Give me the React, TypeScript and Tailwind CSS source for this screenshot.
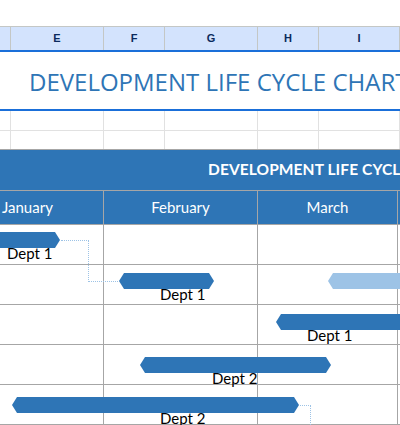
import React from 'react';

const cols = [
  { label: '', w: 'w-[11px]' },
  { label: 'E', w: 'w-[93px]' },
  { label: 'F', w: 'w-[61px]' },
  { label: 'G', w: 'w-[93px]' },
  { label: 'H', w: 'w-[61px]' },
  { label: 'I', w: 'w-[81px]' },
];

const hex = '[clip-path:polygon(5px_0,calc(100%-5px)_0,100%_50%,calc(100%-5px)_100%,5px_100%,0_50%)]';

type Bar = { left: number; width: number; top: number; light?: boolean; label?: string; labelLeft?: number };

const rows: Bar[][] = [
  [{ left: -20, width: 80, top: 7, label: 'Dept 1', labelLeft: 7 }],
  [
    { left: 119, width: 95, top: 8, label: 'Dept 1', labelLeft: 160 },
    { left: 328, width: 90, top: 8, light: true },
  ],
  [{ left: 276, width: 140, top: 9, label: 'Dept 1', labelLeft: 307 }],
  [{ left: 140, width: 191, top: 12, label: 'Dept 2', labelLeft: 212 }],
  [{ left: 12, width: 287, top: 12, label: 'Dept 2', labelLeft: 160 }],
];

function SheetRow({ h, last }: { h: string; last?: string }) {
  return (
    <div className={`flex ${h} border-b ${last ?? 'border-[#e1e1e1]'}`}>
      {cols.map((c, i) => (
        <div key={i} className={`${c.w} shrink-0 border-r border-[#e1e1e1]`} />
      ))}
    </div>
  );
}

export default function App() {
  return (
    <div className="w-[400px] h-[425px] overflow-hidden bg-white font-['Lato',sans-serif]">
      <div className="h-[26px]" />
      {/* column header */}
      <div className="flex h-[26px] bg-[#d3e3fd] border-t border-[#c4c7c5] border-b-2 border-b-[#1a6fd9]">
        {cols.map((c, i) => (
          <div
            key={i}
            className={`${c.w} shrink-0 border-r border-[#c4c7c5] flex items-center justify-center text-[11px] font-bold text-[#0b2a5c] font-['Liberation_Sans',sans-serif]`}
          >
            {c.label}
          </div>
        ))}
      </div>
      {/* title */}
      <div className="h-[59px] border-b-2 border-[#1a6fd9] flex items-center pl-[29px] whitespace-nowrap overflow-hidden">
        <span className="text-[24px] text-[#2e75b6] font-['Open_Sans',sans-serif] pt-[3px]">
          DEVELOPMENT LIFE CYCLE CHART
        </span>
      </div>
      <SheetRow h="h-[20px]" />
      <SheetRow h="h-[19px]" last="border-[#a6a6a6]" />
      {/* banner */}
      <div className="h-[41px] bg-[#2e75b6] border-b border-[#a6a6a6] flex items-center pl-[208px] whitespace-nowrap overflow-hidden">
        <span className="text-[15.5px] font-bold text-white tracking-[0.1px]">DEVELOPMENT LIFE CYCLE CHART</span>
      </div>
      {/* months */}
      <div className="flex h-[34px] bg-[#2e75b6] border-b border-[#a6a6a6] text-white text-[15px]">
        <div className="w-[104px] shrink-0 border-r border-[#a6a6a6] flex items-center pl-[2px]">January</div>
        <div className="w-[154px] shrink-0 border-r border-[#a6a6a6] flex items-center justify-center">February</div>
        <div className="w-[140px] shrink-0 border-r border-[#a6a6a6] flex items-center justify-center">March</div>
      </div>
      {/* gantt rows */}
      <div className="relative">
        {rows.map((bars, ri) => (
          <div key={ri} className="relative flex h-[40px] border-b border-[#a6a6a6]">
            <div className="w-[104px] shrink-0 border-r border-[#a6a6a6]" />
            <div className="w-[154px] shrink-0 border-r border-[#a6a6a6]" />
            <div className="w-[140px] shrink-0 border-r border-[#a6a6a6]" />
            {bars.map((b, bi) => (
              <React.Fragment key={bi}>
                <div
                  className={`absolute h-[16px] ${hex} ${b.light ? 'bg-[#9dc3e6]' : 'bg-[#2e75b6]'}`}
                  style={{ left: b.left, width: b.width, top: b.top }}
                />
                {b.label && (
                  <span
                    className="absolute text-[15px] leading-none text-black"
                    style={{ left: b.labelLeft, top: b.top + 14 }}
                  >
                    {b.label}
                  </span>
                )}
              </React.Fragment>
            ))}
          </div>
        ))}
        {/* dependency connectors */}
        <div className="absolute left-[61px] top-[15px] w-[28px] h-[42px] border-t border-r border-dotted border-[#9dc3e6]" />
        <div className="absolute left-[89px] top-[56px] w-[29px] border-t border-dotted border-[#9dc3e6]" />
        <div className="absolute left-[300px] top-[180px] w-[11px] h-[30px] border-t border-r border-dotted border-[#9dc3e6]" />
      </div>
    </div>
  );
}
